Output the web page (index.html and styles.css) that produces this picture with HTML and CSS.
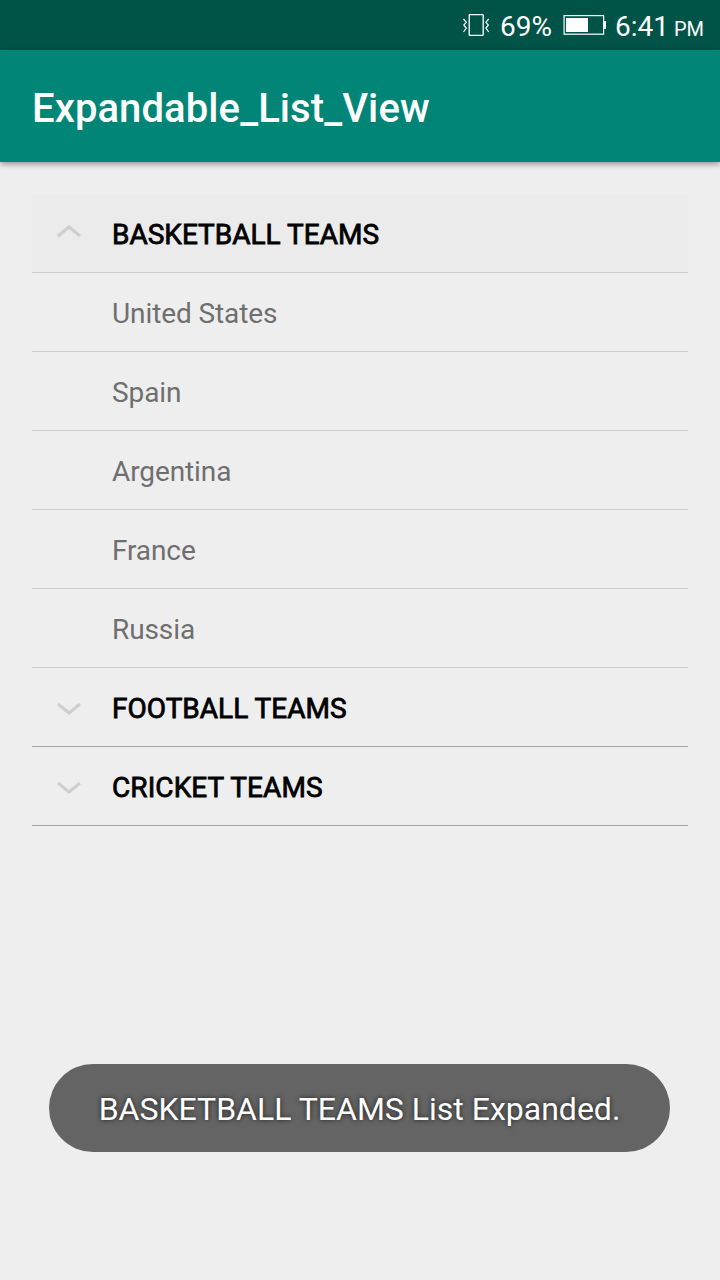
FILE: index.html
```html
<!DOCTYPE html>
<html lang="en">
<head>
<meta charset="utf-8">
<title>Expandable_List_View</title>
<link rel="stylesheet" href="styles.css">
</head>
<body>
<div class="status">
  <svg class="vibrate" width="28" height="24" viewBox="0 0 28 24" fill="none" stroke="#fff"><rect x="7.2" y="1.700" width="14" height="20.600" rx=".6" stroke-width="1.300"/><path d="M1.500 6 4.300 9.300 1.800 12 4.300 15 1.500 19M26.700 6 23.900 9.300 26.400 12 23.900 15 26.700 19" stroke-width="1.200"/></svg>
  <span class="percent">69%</span>
  <svg class="battery" width="44" height="20" viewBox="0 0 44 20"><rect x="1.100" y=".6" width="39.500" height="18.600" fill="none" stroke="#fff" stroke-width="1.200"/><path d="M3 3h22v14H3zM40 6h3v8h-3z" fill="#fff"/></svg>
  <span class="time">6:41 <small>PM</small></span>
</div>
<header class="bar"><h1>Expandable_List_View</h1></header>
<main class="list">
  <div class="row group open"><svg class="chevron" width="26" height="14" viewBox="0 0 26 14"><path d="M2 12 13 3l11 9"/></svg><span>BASKETBALL TEAMS</span></div>
  <div class="row">United States</div>
  <div class="row">Spain</div>
  <div class="row">Argentina</div>
  <div class="row">France</div>
  <div class="row">Russia</div>
  <div class="row group closed"><svg class="chevron" width="26" height="14" viewBox="0 0 26 14"><path d="M2 2 13 11 24 2"/></svg><span>FOOTBALL TEAMS</span></div>
  <div class="row group closed"><svg class="chevron" width="26" height="14" viewBox="0 0 26 14"><path d="M2 2 13 11 24 2"/></svg><span class="wide">CRICKET TEAMS</span></div>
</main>
<div class="toast">BASKETBALL TEAMS List Expanded.</div>
</body>
</html>
```
FILE: styles.css
```css
* { box-sizing: border-box; }
body { margin: 0; width: 720px; height: 1280px; background: #eee; font-family: Roboto, sans-serif; overflow: hidden; position: relative; }
.status { height: 50px; background: #005447; color: #fff; display: flex; align-items: center; justify-content: flex-end; padding-right: 16px; font-size: 28px; }
.percent { margin: 3px 11px 0 10px; }
.time { margin: 3px 0 0 8px; }
.time small { font-size: 20px; margin-left: -2px; }
.bar { height: 112px; background: #008577; color: #fff; padding: 0 32px; display: flex; align-items: center; box-shadow: 0 2px 6px rgba(0,0,0,.4); }
.bar h1 { margin: 4px 0 0; font-size: 40px; font-weight: 500; letter-spacing: .09px; }
.list { margin: 32px 32px 0; }
.row { height: 79px; padding: 3px 0 0 80px; display: flex; align-items: center; border-bottom: 1px solid #cdcdcd; color: #6f6f6f; font-size: 28px; letter-spacing: -.1px; }
.group { padding-left: 24px; color: #000; letter-spacing: 0; }
.group span { margin: -1px 0 0 30px; -webkit-text-stroke: .8px #000; }
.group .wide { letter-spacing: .08px; }
.open { background: #ebebeb; }
.closed { border-bottom-color: #a6a6a6; }
.chevron { fill: none; stroke: #cecece; stroke-width: 3; }
.open .chevron { margin-top: -8px; }
.toast { position: absolute; left: 49px; top: 1064px; width: 621px; height: 88px; border-radius: 44px; background: #646464; color: #fff; display: flex; align-items: center; justify-content: center; padding-top: 2px; font-size: 32px; text-shadow: 0 0 5px rgba(0,0,0,.73); }
```
